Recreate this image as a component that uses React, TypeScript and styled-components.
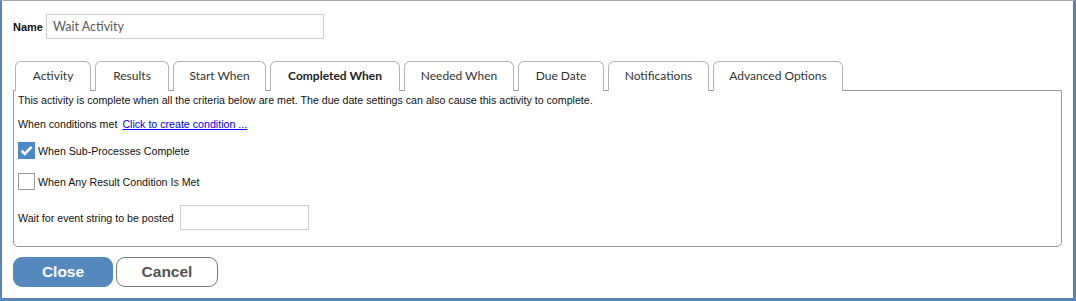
import styled, { createGlobalStyle } from "styled-components";

const Global = createGlobalStyle`
  body {
    margin: 0;
    background: #fff;
    font-family: "Liberation Sans", Arial, sans-serif;
  }
`

const Frame = styled.div`
  box-sizing: border-box;
  width: 1076px;
  height: 301px;
  border-top: 1px solid #a9a9a9;
  border-left: 2px solid #5a84b3;
  border-right: 3px solid #5a84b3;
  border-bottom: 3px solid #5a84b3;
  padding: 13px 11px 0 11px;
`

const NameRow = styled.div`
  display: flex;
  align-items: center;
  gap: 3px;
`

const Label = styled.span`
  font-size: 11px;
  font-weight: bold;
  color: #111;
`

const TextInput = styled.input`
  box-sizing: border-box;
  width: ${props => props.$w}px;
  height: 25px;
  border: 1px solid #cfcfcf;
  padding: 0 6px;
  font-family: Lato, "Noto Sans", sans-serif;
  font-size: 12.5px;
  color: #5a5a5a;
  outline: none;
`

const TabStrip = styled.div`
  display: flex;
  gap: 4px;
  margin: 22px 0 0 2px;
  position: relative;
  z-index: 1;
`

const Tab = styled.div`
  box-sizing: border-box;
  width: ${props => props.$w}px;
  height: 30px;
  padding-bottom: 2px;
  border: 1px solid #b4b4b4;
  border-bottom: none;
  border-radius: 6px 6px 0 0;
  background: #fff;
  display: flex;
  align-items: center;
  justify-content: center;
  font-family: Lato, "Noto Sans", sans-serif;
  font-size: 12px;
  font-weight: ${props => (props.$active ? 700 : 400)};
  color: ${props => (props.$active ? "#222" : "#333")};
`

const Panel = styled.div`
  box-sizing: border-box;
  width: 1049px;
  height: 157px;
  margin-top: -1px;
  border: 1px solid #9a9a9a;
  border-radius: 0 0 5px 5px;
  padding: 0 4px;
  display: flex;
  flex-direction: column;
  font-size: 10.65px;
  color: #111;
`

const Row = styled.div`
  display: flex;
  align-items: center;
  gap: ${props => props.$gap || 0}px;
  margin-top: ${props => props.$top}px;
  line-height: 14px;
`

const LinkText = styled.a`
  color: #0000ee;
  text-decoration: underline;
  margin-left: 5px;
  cursor: pointer;
`

const Box = styled.span`
  box-sizing: border-box;
  width: 17px;
  height: 17px;
  display: inline-flex;
  align-items: center;
  justify-content: center;
  background: ${props => (props.$checked ? "#4a89c8" : "#fff")};
  border: 1px solid ${props => (props.$checked ? "#4a89c8" : "#9a9a9a")};
`

const ButtonRow = styled.div`
  display: flex;
  gap: 3px;
  margin-top: 10px;
`

const Button = styled.button`
  box-sizing: border-box;
  width: ${props => (props.$primary ? 100 : 102)}px;
  height: 30px;
  border-radius: 9px;
  border: 1px solid ${props => (props.$primary ? "#5589bd" : "#7a7a7a")};
  background: ${props => (props.$primary ? "#5589bd" : "#fff")};
  color: ${props => (props.$primary ? "#fff" : "#555")};
  font-family: "Liberation Sans", Arial, sans-serif;
  font-size: 15.5px;
  font-weight: bold;
  padding: 0;
`

const tabs = [
  { name: "Activity", w: 76 },
  { name: "Results", w: 74 },
  { name: "Start When", w: 93 },
  { name: "Completed When", w: 130 },
  { name: "Needed When", w: 110 },
  { name: "Due Date", w: 86 },
  { name: "Notifications", w: 101 },
  { name: "Advanced Options", w: 130 },
]

function Check({ checked }) {
  return (
    <Box $checked={checked}>
      {checked && (
        <svg width="13" height="11" viewBox="0 0 13 11">
          <path d="M1.5 5.8 L4.8 9 L11.5 1.8" fill="none" stroke="#fff" strokeWidth="2.6" />
        </svg>
      )}
    </Box>
  )
}

export default function App() {
  return (
    <>
      <Global />
      <Frame>
        <NameRow>
          <Label>Name</Label>
          <TextInput $w={278} defaultValue="Wait Activity" />
        </NameRow>
        <TabStrip>
          {tabs.map(t => (
            <Tab key={t.name} $w={t.w} $active={t.name === "Completed When"}>
              {t.name}
            </Tab>
          ))}
        </TabStrip>
        <Panel>
          <Row $top={2}>
            This activity is complete when all the criteria below are met. The due date settings can also cause this activity to complete.
          </Row>
          <Row $top={10}>
            When conditions met
            <LinkText>Click to create condition ...</LinkText>
          </Row>
          <Row $top={11} $gap={3}>
            <Check checked />
            When Sub-Processes Complete
          </Row>
          <Row $top={14} $gap={3}>
            <Check />
            When Any Result Condition Is Met
          </Row>
          <Row $top={15} $gap={6}>
            Wait for event string to be posted
            <TextInput $w={129} />
          </Row>
        </Panel>
        <ButtonRow>
          <Button $primary>Close</Button>
          <Button>Cancel</Button>
        </ButtonRow>
      </Frame>
    </>
  )
}
